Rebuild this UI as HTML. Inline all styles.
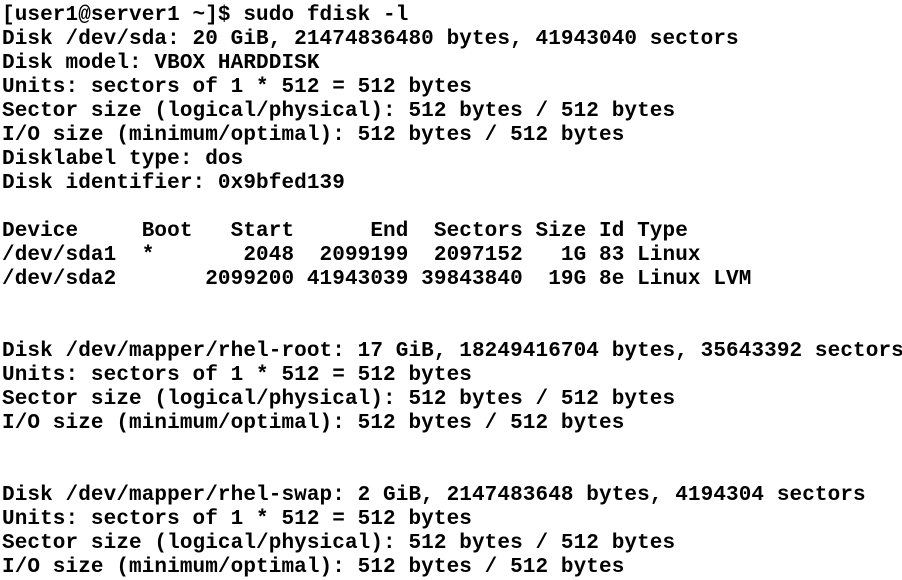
<!DOCTYPE html>
<html><head><style>
body{margin:0;background:#fff;width:902px;height:577px;overflow:hidden}
pre{margin:0;padding:4px 0 0 2px;font-family:"Liberation Mono",monospace;font-weight:bold;font-size:21px;line-height:24px;color:#000;letter-spacing:0.1px}
</style></head><body><pre>[user1@server1 ~]$ sudo fdisk -l
Disk /dev/sda: 20 GiB, 21474836480 bytes, 41943040 sectors
Disk model: VBOX HARDDISK
Units: sectors of 1 * 512 = 512 bytes
Sector size (logical/physical): 512 bytes / 512 bytes
I/O size (minimum/optimal): 512 bytes / 512 bytes
Disklabel type: dos
Disk identifier: 0x9bfed139

Device     Boot   Start      End  Sectors Size Id Type
/dev/sda1  *       2048  2099199  2097152   1G 83 Linux
/dev/sda2       2099200 41943039 39843840  19G 8e Linux LVM


Disk /dev/mapper/rhel-root: 17 GiB, 18249416704 bytes, 35643392 sectors
Units: sectors of 1 * 512 = 512 bytes
Sector size (logical/physical): 512 bytes / 512 bytes
I/O size (minimum/optimal): 512 bytes / 512 bytes


Disk /dev/mapper/rhel-swap: 2 GiB, 2147483648 bytes, 4194304 sectors
Units: sectors of 1 * 512 = 512 bytes
Sector size (logical/physical): 512 bytes / 512 bytes
I/O size (minimum/optimal): 512 bytes / 512 bytes</pre></body></html>
